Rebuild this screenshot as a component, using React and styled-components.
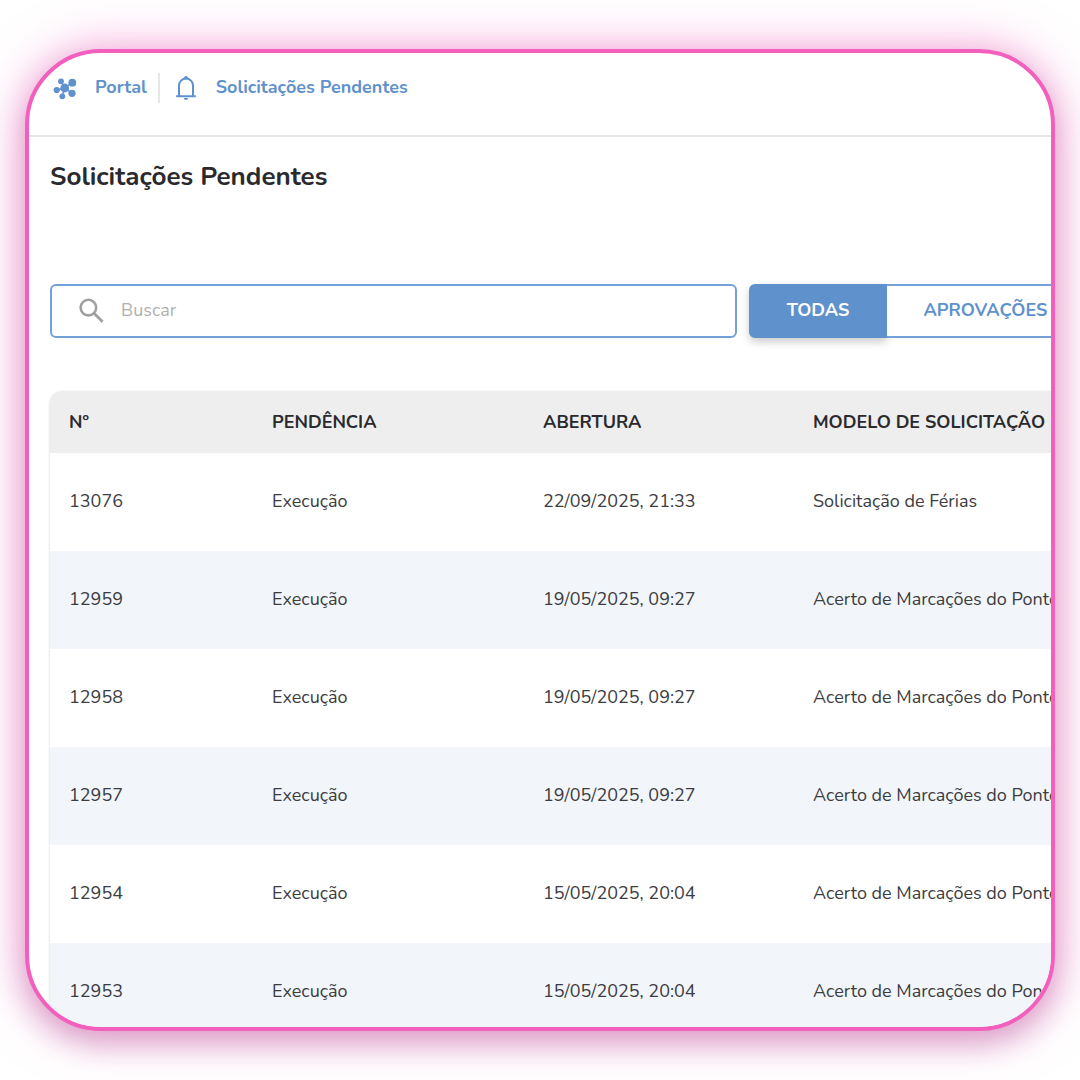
import styled, { createGlobalStyle } from 'styled-components';

const colors = {
  blue: '#5f91cc',
  outline: '#73a0d6',
  pink: '#f25fbd',
  ink: '#2a2a2e',
  text: '#3c3c41',
  line: '#e6e6e6',
};

const requests = [
  { id: '13076', pending: 'Execução', opened: '22/09/2025, 21:33', model: 'Solicitação de Férias' },
  { id: '12959', pending: 'Execução', opened: '19/05/2025, 09:27', model: 'Acerto de Marcações do Ponto' },
  { id: '12958', pending: 'Execução', opened: '19/05/2025, 09:27', model: 'Acerto de Marcações do Ponto' },
  { id: '12957', pending: 'Execução', opened: '19/05/2025, 09:27', model: 'Acerto de Marcações do Ponto' },
  { id: '12954', pending: 'Execução', opened: '15/05/2025, 20:04', model: 'Acerto de Marcações do Ponto' },
  { id: '12953', pending: 'Execução', opened: '15/05/2025, 20:04', model: 'Acerto de Marcações do Ponto' },
];

const GlobalStyle = createGlobalStyle`
  * {
    box-sizing: border-box;
  }
  body {
    margin: 0;
    background: #fff;
    color: ${colors.text};
    font-family: Nunito, Lato, sans-serif;
    font-size: 18px;
  }
`;

const Page = styled.div`
  display: flex;
  height: 100vh;
  padding: 49px 25px;
`;

const Card = styled.div`
  flex: 1;
  min-width: 0;
  overflow: hidden;
  background: #fff;
  border: 4px solid ${colors.pink};
  border-radius: 76px;
  box-shadow: 0 0 50px rgba(242, 95, 189, 0.55),
    0 12px 28px rgba(120, 30, 100, 0.3);
`;

const TopBar = styled.nav`
  display: flex;
  align-items: center;
  padding: 20px 24px 32px;
  border-bottom: 2px solid ${colors.line};
`;

const NavLink = styled.a`
  display: flex;
  align-items: center;
  gap: 18px;
  height: 30px;
  color: ${colors.blue};
  font-size: 18px;
  font-weight: 700;
  line-height: 24px;
  text-decoration: none;
  white-space: nowrap;

  & + & {
    margin-left: 11px;
    padding-left: 14px;
    border-left: 2px solid ${colors.line};
  }
`;

const NavText = styled.span`
  padding-bottom: 2px;
`;

const Content = styled.main`
  padding: 24px 0 0 21px;
`;

const Title = styled.h1`
  margin: 0;
  color: ${colors.ink};
  font-size: 26px;
  font-weight: 700;
  line-height: 32px;
`;

const Filters = styled.div`
  display: grid;
  grid-template-columns: minmax(0, 25fr) minmax(0, 11fr);
  gap: 12px;
  margin: 91px 0 53px;
`;

const SearchBox = styled.label`
  display: flex;
  align-items: center;
  gap: 16px;
  height: 54px;
  padding: 0 27px;
  color: #a0a0a0;
  border: 2px solid ${colors.outline};
  border-radius: 6px;
`;

const SearchInput = styled.input`
  flex: 1;
  min-width: 0;
  padding: 0 0 2px;
  color: ${colors.text};
  font: inherit;
  background: none;
  border: 0;
  outline: 0;

  &::placeholder {
    color: #b0b0b0;
    opacity: 1;
  }
`;

const Segments = styled.div`
  display: flex;
`;

const Segment = styled.button`
  flex: none;
  height: 54px;
  padding: 0 36px 2px;
  color: ${(props) => (props.$active ? '#fff' : colors.blue)};
  font-family: inherit;
  font-size: 18px;
  font-weight: 700;
  background: ${(props) => (props.$active ? colors.blue : '#fff')};
  border: 2px solid ${(props) => (props.$active ? colors.blue : colors.outline)};
  border-left-width: ${(props) => (props.$active ? '2px' : '0')};
  border-radius: ${(props) => (props.$active ? '6px 0 0 6px' : '0')};
  box-shadow: ${(props) =>
    props.$active ? '0 4px 8px rgba(0, 0, 0, 0.2)' : 'none'};
`;

const TableWrap = styled.div`
  overflow: hidden;
  border-radius: 12px 0 0 0;
  box-shadow: 0 1px 3px rgba(0, 0, 0, 0.18);
`;

const Table = styled.table`
  width: 100%;
  table-layout: fixed;
  border-collapse: collapse;
`;

const HeadCell = styled.th`
  width: ${(props) => props.$width || 'auto'};
  height: 62px;
  padding: 0 0 0 19px;
  color: ${colors.ink};
  font-size: 18px;
  font-weight: 700;
  text-align: left;
  white-space: nowrap;
  background: #eee;
`;

const Row = styled.tr`
  background: #fff;

  &:nth-child(even) {
    background: #f2f5fa;
  }
`;

const Cell = styled.td`
  height: 98px;
  padding: 0 0 2px 19px;
  white-space: nowrap;
`;

const HubIcon = () => (
  <svg width="24" height="24" viewBox="0 0 24 24" fill="currentColor" aria-hidden="true">
    <path
      d="M11.7 12 8 5.3M11.7 12l7.6-5.3M11.7 12l-8 2M11.7 12l7.3 5.3M11.7 12l-2.4 8.3"
      stroke="currentColor"
      strokeWidth="1.5"
    />
    <circle cx="11.7" cy="12" r="4.4" />
    <circle cx="8" cy="5.3" r="2.9" />
    <circle cx="19.3" cy="6.7" r="3.9" />
    <circle cx="3.7" cy="14" r="3.1" />
    <circle cx="19" cy="17.3" r="3.6" />
    <circle cx="9.3" cy="20.3" r="2.9" />
  </svg>
);

const BellIcon = () => (
  <svg width="24" height="24" viewBox="0 0 24 24" fill="none" stroke="currentColor" strokeWidth="2" aria-hidden="true">
    <path d="M5 19.5V9.6a7 7 0 0 1 14 0v9.9M2.2 20.2h19.6" />
    <path d="M10 3.2V2a2 2 0 1 1 4 0v1.2zM9.9 22h4.2a2.1 2 0 0 1-4.2 0z" fill="currentColor" stroke="none" />
  </svg>
);

const SearchIcon = () => (
  <svg width="26" height="26" viewBox="0 0 26 26" fill="none" stroke="currentColor" aria-hidden="true">
    <circle cx="9.4" cy="9.6" r="7.8" strokeWidth="2.6" />
    <path d="m15 15.2 8.6 8.6" strokeWidth="2.8" />
  </svg>
);

function App() {
  return (
    <>
      <GlobalStyle />
      <Page>
        <Card>
          <TopBar>
            <NavLink href="#portal">
              <HubIcon />
              <NavText>Portal</NavText>
            </NavLink>
            <NavLink href="#pendentes">
              <BellIcon />
              <NavText>Solicitações Pendentes</NavText>
            </NavLink>
          </TopBar>
          <Content>
            <Title>Solicitações Pendentes</Title>
            <Filters>
              <SearchBox htmlFor="search">
                <SearchIcon />
                <SearchInput id="search" type="text" placeholder="Buscar" />
              </SearchBox>
              <Segments>
                <Segment type="button" $active>
                  TODAS
                </Segment>
                <Segment type="button">APROVAÇÕES</Segment>
              </Segments>
            </Filters>
            <TableWrap>
              <Table>
                <thead>
                  <tr>
                    <HeadCell $width="203px">Nº</HeadCell>
                    <HeadCell $width="271px">PENDÊNCIA</HeadCell>
                    <HeadCell $width="270px">ABERTURA</HeadCell>
                    <HeadCell>MODELO DE SOLICITAÇÃO</HeadCell>
                  </tr>
                </thead>
                <tbody>
                  {requests.map((request) => (
                    <Row key={request.id}>
                      <Cell>{request.id}</Cell>
                      <Cell>{request.pending}</Cell>
                      <Cell>{request.opened}</Cell>
                      <Cell>{request.model}</Cell>
                    </Row>
                  ))}
                </tbody>
              </Table>
            </TableWrap>
          </Content>
        </Card>
      </Page>
    </>
  );
}

export default App;
